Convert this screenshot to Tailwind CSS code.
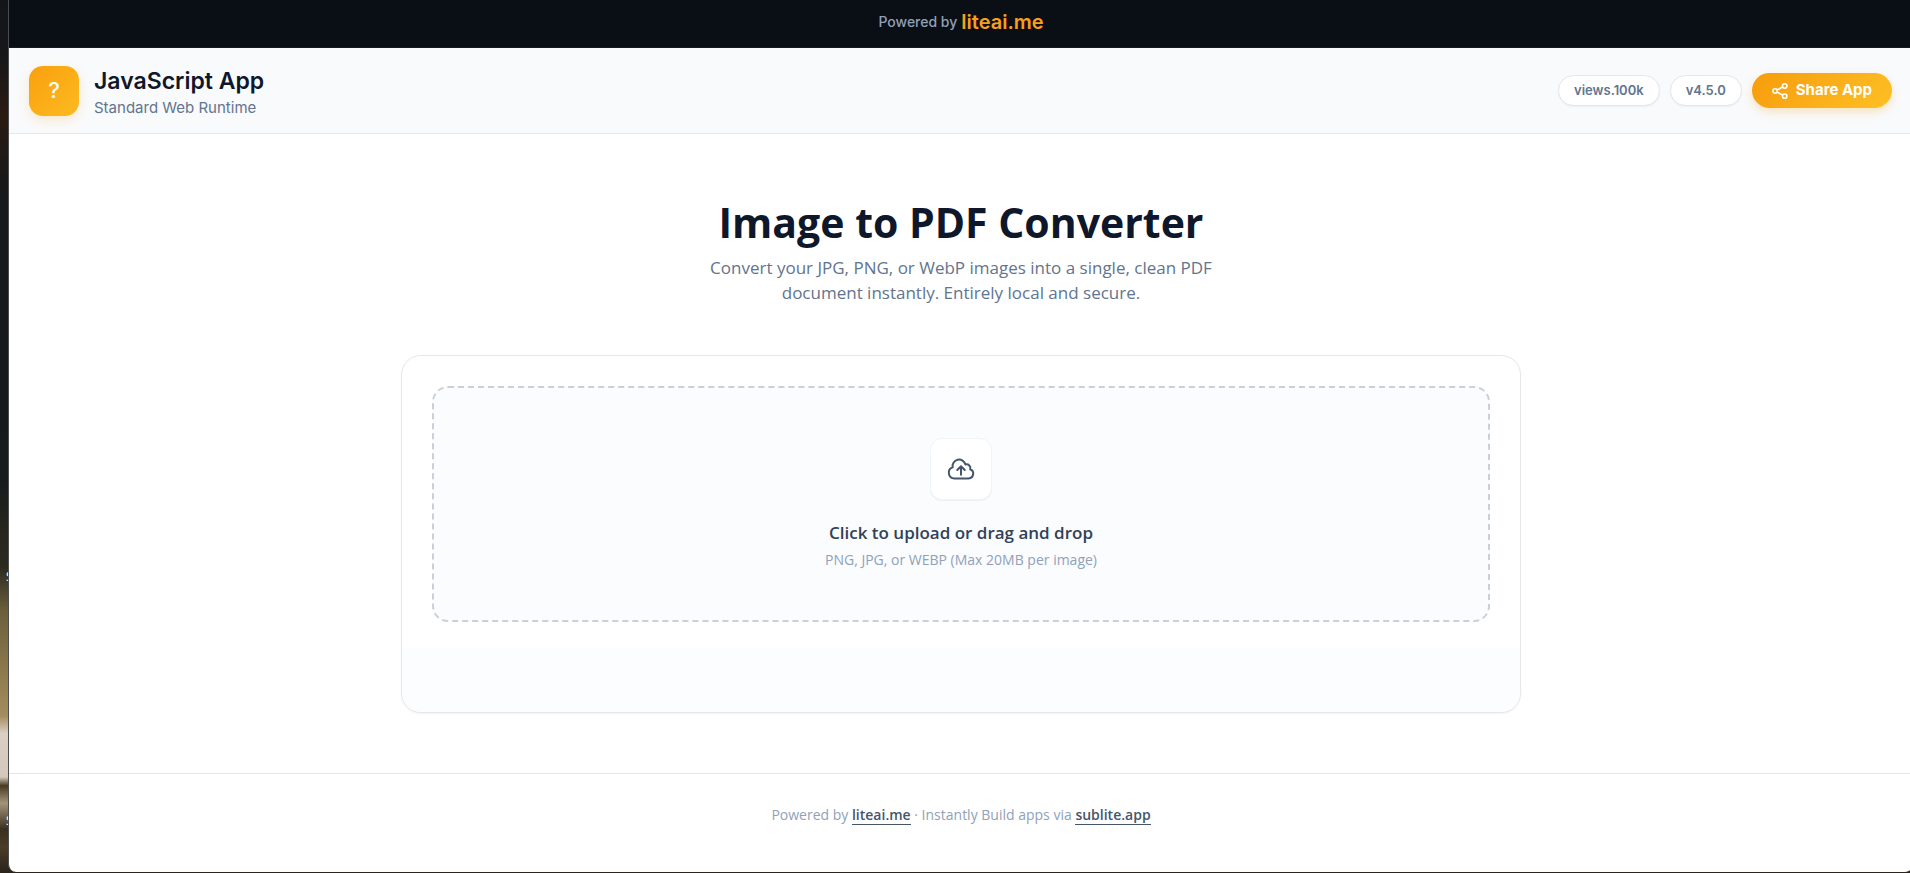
<!DOCTYPE html>
<html lang="en">
<head>
<meta charset="utf-8">
<meta name="viewport" content="width=device-width, initial-scale=1">
<title>Image to PDF Converter</title>
<script src="https://cdn.jsdelivr.net/npm/@tailwindcss/browser@4"></script>
</head>
<body class="relative min-h-screen overflow-hidden bg-[linear-gradient(to_bottom,#131619_0%,#15171a_6%,#2b1b12_13%,#17191b_22%,#171b1c_55%,#25251c_60%,#2c2a1f_65%,#6b5f3c_70%,#8d7a4c_77%,#a58c5e_82%,#d9cfc4_84%,#d3c8ba_89%,#4a3a22_90%,#a3947a_92%,#3a2f1f_95%,#4a3c28_97%,#2b241b_100%)] font-['Open_Sans','Noto_Sans',sans-serif]">
<!-- Desktop labels behind the window -->
<span class="absolute left-[6px] top-[569px] text-xs text-white" aria-hidden="true">S</span>
<span class="absolute left-[6px] top-[813px] text-xs text-white" aria-hidden="true">S</span>

<div class="relative -mr-[3px] mb-px ml-[8px] flex min-h-[calc(100vh-1px)] flex-col overflow-hidden rounded-b-lg border-l border-[#4a4c4e] bg-white">
  <div class="flex h-12 items-center justify-center gap-1 border-b border-[#1a1a1d] bg-[#0a0e15] pb-1 font-['Inter',sans-serif]">
    <span class="text-[14px] font-medium text-slate-400">Powered by</span>
    <a href="#" class="text-[20px] font-semibold text-[#f9a01b]">liteai.me</a>
  </div>

  <header class="flex min-h-[86px] items-center justify-between border-b border-gray-200 bg-[#f9fafc] pl-5 pr-[21px] font-['Inter',sans-serif]">
    <div class="flex items-center gap-[15px]">
      <div class="flex size-[50px] items-center justify-center rounded-[14px] bg-linear-135 from-[#f9a00d] to-[#fdba20] text-[22px] font-medium text-white shadow-[0_4px_12px_rgba(245,158,11,0.2)]">?</div>
      <div class="pt-1.5">
        <div class="text-[23px] font-semibold leading-7 text-slate-900">JavaScript App</div>
        <div class="text-[15px] leading-[26px] text-slate-500">Standard Web Runtime</div>
      </div>
    </div>
    <div class="flex items-center gap-[10px]">
      <span class="flex h-[31px] items-center rounded-full border border-gray-200 bg-white px-[15px] text-[13px] font-semibold text-slate-500 shadow-xs">views.100k</span>
      <span class="flex h-[31px] items-center rounded-full border border-gray-200 bg-white px-[15px] text-[13px] font-semibold text-slate-500 shadow-xs">v4.5.0</span>
      <button type="button" class="flex h-[35px] items-center gap-2 rounded-full bg-linear-135 from-[#f79c0b] to-[#fdc024] px-5 text-[15px] font-bold text-white shadow-[0_4px_10px_rgba(245,158,11,0.25)]">
        <svg class="size-4" viewBox="0 0 16 16" fill="none" stroke="currentColor" stroke-width="1.6" aria-hidden="true"><circle cx="12.7" cy="3" r="2.2"/><circle cx="3.1" cy="8" r="2.2"/><circle cx="12.7" cy="13.2" r="2.2"/><path d="M5.1 7 10.7 4M5.1 9.1l5.6 3"/></svg>
        Share App
      </button>
    </div>
  </header>

  <main class="flex-1 px-6 pb-[60px] pt-[62px]">
    <div class="text-center">
      <h1 class="text-[41px] font-bold leading-[52px] text-slate-900">Image to PDF Converter</h1>
      <p class="mx-auto mt-[7px] max-w-[520px] text-[17px] leading-[25px] text-slate-500">Convert your JPG, PNG, or WebP images into a single, clean PDF document instantly. Entirely local and secure.</p>
    </div>
    <section class="mx-auto mt-[50px] max-w-[1120px] overflow-hidden rounded-[20px] border border-gray-200 bg-white shadow-xs">
      <div class="px-[30px] pb-[26px] pt-[30px]">
        <label class="flex cursor-pointer flex-col items-center rounded-2xl border-2 border-dashed border-[#cbd0d8] bg-[#fafcfe] pb-[46px] pt-[50px]">
          <input type="file" accept="image/png,image/jpeg,image/webp" multiple class="sr-only">
          <span class="flex size-[62px] items-center justify-center rounded-xl border border-slate-100 bg-white text-slate-600 shadow-2xs">
            <svg class="size-[30px]" viewBox="0 0 24 24" fill="none" stroke="currentColor" stroke-width="1.6" stroke-linecap="round" stroke-linejoin="round" aria-hidden="true"><path d="M12 16.5V9.75m0 0 3 3m-3-3-3 3M6.75 19.5a4.5 4.5 0 0 1-1.41-8.775 5.25 5.25 0 0 1 10.233-2.33 3 3 0 0 1 3.758 3.848A3.752 3.752 0 0 1 18 19.5H6.75Z"/></svg>
          </span>
          <span class="mt-5 text-[17px] font-semibold leading-[26px] text-slate-700">Click to upload or drag and drop</span>
          <span class="text-[14px] leading-7 text-slate-400">PNG, JPG, or WEBP (Max 20MB per image)</span>
        </label>
      </div>
      <div class="h-16 bg-[#fcfdfe]"></div>
    </section>
  </main>

  <footer class="border-t border-gray-200 pb-[46px] pt-[30px] text-center text-[14px] leading-[22px] text-slate-400">
    Powered by <a href="#" class="border-b border-slate-600 font-semibold text-slate-600">liteai.me</a> · Instantly Build apps via <a href="#" class="border-b border-slate-600 font-semibold text-slate-600">sublite.app</a>
  </footer>
</div>
</body>
</html>
